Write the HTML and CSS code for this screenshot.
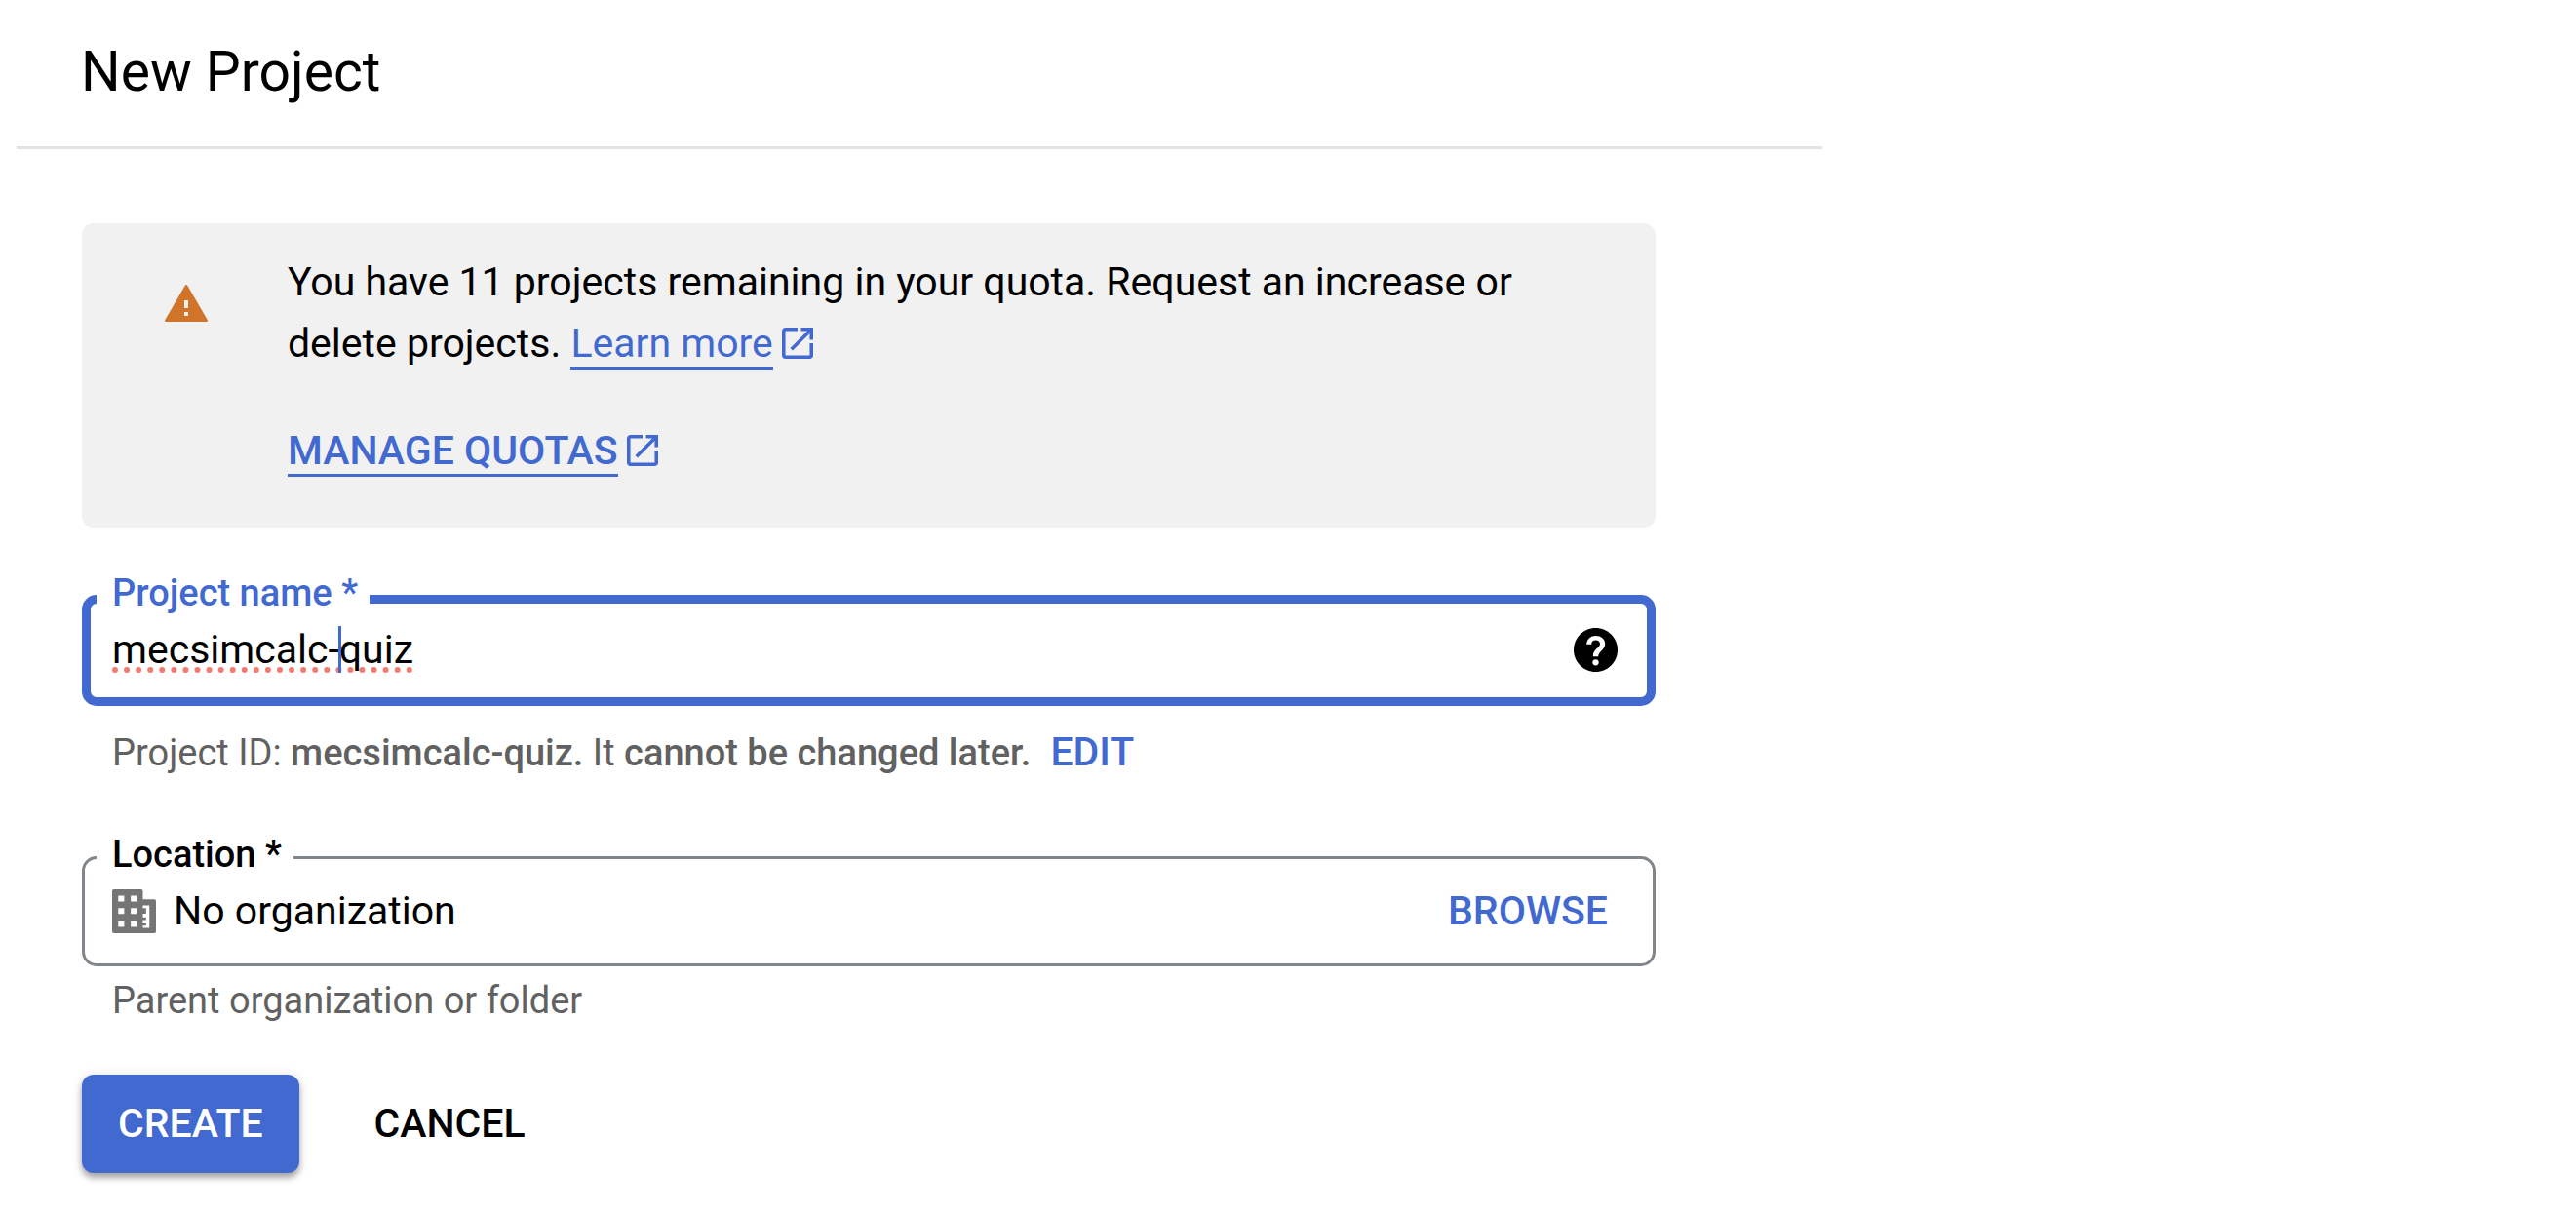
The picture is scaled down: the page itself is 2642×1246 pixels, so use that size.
FILE: index.html
```html
<!DOCTYPE html>
<html lang="en">
<head>
  <meta charset="utf-8">
  <meta name="viewport" content="width=device-width, initial-scale=1">
  <title>New Project</title>
  <link rel="stylesheet" href="styles.css">
</head>
<body>
  <svg class="sprite" aria-hidden="true">
    <symbol id="open-in-new" viewBox="3 3 18 18">
      <path d="M19 19H5V5h7V3H5c-1.11 0-2 .9-2 2v14c0 1.1.89 2 2 2h14c1.1 0 2-.9 2-2v-7h-2v7zM14 3v2h3.59l-9.83 9.83 1.41 1.41L19 6.41V10h2V3h-7z"/>
    </symbol>
  </svg>
  <div class="page">
    <header class="page-header">
      <h1 class="page-title">New Project</h1>
    </header>
    <main class="content">
      <section class="notice">
        <svg class="notice-icon" viewBox="0 0 24 24" role="img" aria-label="Warning">
          <path d="M1.6 21h20.8a.6.6 0 0 0 .5-.9L12.6 2.4a.7.7 0 0 0-1.2 0L1.1 20.1a.6.6 0 0 0 .5.9zM13 18h-2v-2h2v2zm0-4h-2v-4h2v4z"/>
        </svg>
        <div class="notice-body">
          <p class="notice-text">You have 11 projects remaining in your quota. Request an increase or delete projects. <a class="link" href="#learn">Learn more</a><svg class="link-icon" aria-hidden="true"><use href="#open-in-new"/></svg></p>
          <p class="notice-text"><a class="link link-strong" href="#quotas">MANAGE QUOTAS</a><svg class="link-icon" aria-hidden="true"><use href="#open-in-new"/></svg></p>
        </div>
      </section>
      <form class="form">
        <fieldset class="field field-active">
          <legend class="field-legend"><label for="name">Project name *</label></legend>
          <div class="field-row">
            <div class="text-wrap">
              <input class="text-input misspelled" id="name" type="text" value="mecsimcalc-quiz" spellcheck="false" autocomplete="off">
              <span class="caret"></span>
            </div>
            <button class="icon-button" type="button" aria-label="Help">
              <svg class="help-icon" viewBox="2 2 20 20" aria-hidden="true">
                <path d="M12 2C6.48 2 2 6.48 2 12s4.48 10 10 10 10-4.48 10-10S17.52 2 12 2z"/>
                <path class="help-mark" d="M7.800 9.400a4.200 3.900 0 0 1 4.200-3.800c2.400 0 4.300 1.400 4.300 3.700 0 2.700-3.100 3.300-3.100 5.700h-2.400c0-3.700 3.200-3.900 3.200-5.700 0-1-.8-1.700-2-1.700-1.100 0-1.900.7-1.900 1.800z"/>
                <circle class="help-mark" cx="12" cy="17.700" r="1.400"/>
              </svg>
            </button>
          </div>
        </fieldset>
        <div class="id-line">
          <p class="hint">Project ID: <strong>mecsimcalc-quiz.</strong> It <strong>cannot be changed later.</strong></p>
          <button class="text-button" type="button">EDIT</button>
        </div>
        <fieldset class="field">
          <legend class="field-legend"><label for="location">Location *</label></legend>
          <div class="field-row">
            <svg class="org-icon" viewBox="2 2 20 20" aria-hidden="true">
              <path fill-rule="evenodd" d="M2.800 2H15.200a.8.8 0 0 1 .8.8V6.500h5.200a.8.8 0 0 1 .8.800V21.200a.8.8 0 0 1-.8.800H2.800a.8.8 0 0 1-.8-.800V2.800a.8.8 0 0 1 .8-.800zM4.800 4.900v2.700h2.700V4.900zM10.500 4.900v2.700h2.700V4.900zM4.800 10.500v2.700h2.700v-2.700zM10.500 10.500v2.700h2.700v-2.700zM4.800 16.400v2.700h2.700v-2.700zM10.500 16.400v2.700h2.700v-2.700zM16 9.300v1.200h1.500v2.600H16v1.700h1.500v1.200H16v1.600h1.500v1H16v1h3V9.300z"/>
            </svg>
            <input class="text-input" id="location" type="text" value="No organization" readonly>
            <button class="text-button" type="button">BROWSE</button>
          </div>
        </fieldset>
        <p class="hint hint-location">Parent organization or folder</p>
        <div class="actions">
          <button class="button button-primary" type="button">CREATE</button>
          <button class="button" type="button">CANCEL</button>
        </div>
      </form>
    </main>
  </div>
</body>
</html>
```
FILE: styles.css
```css
* {
  box-sizing: border-box;
}

body {
  margin: 0;
  background: #fff;
  color: #000;
  font-family: Roboto, "Liberation Sans", sans-serif;
  font-size: 41px;
}

h1,
p {
  margin: 0;
}

button,
input {
  font: inherit;
}

button {
  padding: 0;
  border: 0;
  background: none;
  color: inherit;
  cursor: pointer;
}

.sprite {
  display: none;
}

.page {
  max-width: 1869px;
  padding-left: 17px;
}

.page-header {
  padding: 40px 66px 42px;
  border-bottom: 3px solid #e2e2e2;
}

.page-title {
  font-size: 57px;
  font-weight: 400;
  line-height: 68px;
}

.content {
  padding: 76px 171px 42px 67px;
}

.notice {
  display: flex;
  gap: 80px;
  padding: 29px 83px 47px;
  border-radius: 12px;
  background: #f1f1f1;
}

.notice-icon {
  flex: none;
  width: 48px;
  height: 48px;
  margin-top: 30px;
  fill: #cf7429;
}

.notice-body {
  display: grid;
  gap: 47px;
}

.notice-text {
  line-height: 63px;
}

.link {
  border-bottom: 3px solid;
  color: #4169d0;
  text-decoration: none;
}

.link-strong {
  font-weight: 500;
}

.link-icon {
  width: 32px;
  height: 32px;
  margin-left: 9px;
  vertical-align: -2px;
  fill: #4169d0;
}

.form {
  padding-top: 45px;
}

.field {
  min-width: 0;
  margin: 0;
  padding: 6px 46px 30px 12px;
  border: 3px solid #80868b;
  border-radius: 15px;
}

.field-active {
  padding: 0 30px 25px 6px;
  border: 9px solid #4169d0;
}

.field-legend {
  padding: 0 12px 6px 16px;
  font-size: 38px;
  font-weight: 500;
  line-height: 44px;
}

.field-active .field-legend {
  padding-bottom: 12px;
  color: #4169d0;
}

.field-row {
  display: flex;
  align-items: center;
  padding-left: 16px;
}

.text-wrap {
  position: relative;
  flex: 1;
}

.text-input {
  display: block;
  flex: 1;
  width: 100%;
  min-width: 0;
  height: 48px;
  padding: 0;
  border: 0;
  outline: 0;
  background: none;
  color: #000;
}

.misspelled {
  text-decoration: underline dotted #f27b6f 6px;
  text-decoration-skip-ink: none;
  text-underline-offset: 4px;
}

.caret {
  position: absolute;
  top: 0;
  left: 232px;
  width: 3px;
  height: 48px;
  background: #4169d0;
}

.icon-button,
.help-icon {
  display: block;
  width: 45px;
  height: 45px;
}

.help-mark {
  fill: #fff;
}

.id-line {
  display: flex;
  gap: 20px;
  align-items: baseline;
  margin: 23px 0 58px;
  padding-left: 31px;
}

.hint {
  color: #616161;
  font-size: 38px;
  line-height: 48px;
}

.hint strong {
  font-weight: 500;
}

.hint-location {
  margin-top: 11px;
  padding-left: 31px;
}

.text-button {
  color: #4169d0;
  font-weight: 500;
  line-height: 48px;
}

.org-icon {
  flex: none;
  width: 45px;
  height: 45px;
  margin-right: 18px;
  fill: #757575;
}

.actions {
  display: flex;
  gap: 40px;
  margin-top: 52px;
}

.button {
  padding: 0 37px;
  border-radius: 12px;
  font-weight: 500;
  line-height: 101px;
}

.button-primary {
  background: #4169d0;
  box-shadow: 0 5px 6px rgba(0, 0, 0, 0.3), 0 1px 12px rgba(0, 0, 0, 0.12);
  color: #fff;
}
```
